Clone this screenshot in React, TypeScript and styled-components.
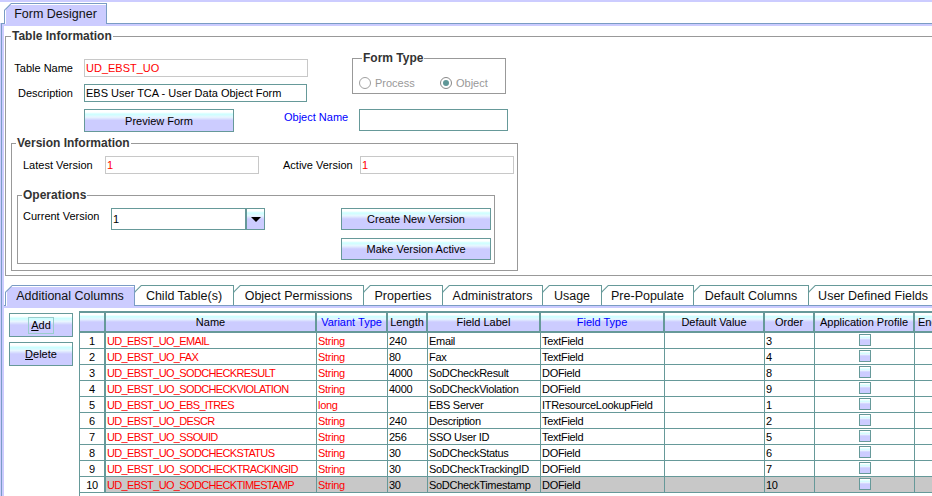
import React from 'react'
import styled, { createGlobalStyle } from 'styled-components'

const TEAL = '#669999'
const EDGE = '#7a9cc4'
const LAVENDER = '#ccccff'
const CYAN = '#ccffff'
const GLOSS = `linear-gradient(to bottom, #ffffff 0%, #ffffff 10%, ${CYAN} 20%, #e8f6ff 34%, ${LAVENDER} 50%, ${LAVENDER} 100%)`

const GlobalStyle = createGlobalStyle`
  html, body { margin: 0; padding: 0; background: #fff; }
  body {
    font-family: "Liberation Sans", Arial, sans-serif;
    font-size: 11px;
    color: #000;
  }
`

const Page = styled.div`
  width: 932px;
  height: 496px;
  overflow: hidden;
  box-sizing: border-box;
  border-top: 2px solid ${LAVENDER};
  background: #fff;
  display: flex;
  flex-direction: column;
`

const TopTabs = styled.div`
  height: 21px;
  flex: none;
  display: flex;
  align-items: flex-end;
  padding-left: 5px;
`

const TabShape = styled.div<{ $edge: string; $width: number; $selected?: boolean }>`
  position: relative;
  z-index: ${p => (p.$selected ? 2 : 1)};
  flex: none;
  width: ${p => p.$width}px;
  height: ${p => (p.$selected ? 21 : 20)}px;
  margin-left: -1px;
  margin-bottom: ${p => (p.$selected ? -1 : 0)}px;
  box-sizing: border-box;
  padding: 1px 1px 0 1px;
  background: ${p => p.$edge};
  clip-path: polygon(7px 0, 100% 0, 100% 100%, 0 100%, 0 7px);
`

const TabFace = styled.div<{ $selected?: boolean }>`
  height: 100%;
  box-sizing: border-box;
  padding-bottom: ${p => (p.$selected ? 1 : 0)}px;
  background: ${p => (p.$selected ? LAVENDER : '#fff')};
  box-shadow: ${p => (p.$selected ? 'inset 1px 1px 0 #fff' : 'none')};
  clip-path: polygon(6.5px 0, 100% 0, 100% 100%, 0 100%, 0 6.5px);
  display: flex;
  align-items: center;
  justify-content: center;
  font-size: 12.5px;
  color: #111;
  white-space: nowrap;
`

const Pane = styled.div`
  flex: 1;
  min-height: 0;
  margin-left: 1px;
  border-top: 1px solid ${EDGE};
  border-left: 1px solid ${EDGE};
  box-shadow: -1px 0 0 ${LAVENDER};
  display: flex;
  flex-direction: column;
`

const PaneBody = styled.div`
  flex: 1;
  min-height: 0;
  border-top: 2px solid ${LAVENDER};
  border-left: 2px solid ${LAVENDER};
  display: flex;
  flex-direction: column;
`

const Group = styled.fieldset<{ $width?: number }>`
  margin: 0;
  padding: 0;
  min-width: 0;
  box-sizing: border-box;
  border: 1px solid #999999;
  ${p => (p.$width ? `width: ${p.$width}px; flex: none;` : '')}
`

const GroupTitle = styled.legend<{ $indent: number }>`
  padding: 0 1px;
  margin-left: ${p => p.$indent}px;
  font-weight: bold;
  font-size: 12px;
  line-height: 14px;
  color: #333;
`

const TableInfo = styled(Group)`
  margin: 3px -14px 0 1px;
`

const InfoTop = styled.div`
  display: flex;
  align-items: flex-start;
  margin-top: 8px;
`

const InfoFields = styled.div`
  width: 346px;
  flex: none;
  padding-top: 8px;
  display: flex;
  flex-direction: column;
  gap: 7px;
`

const FieldRow = styled.div`
  display: flex;
  align-items: center;
  gap: 11px;
`

const FieldLabel = styled.div<{ $width: number; $align?: string; $color?: string }>`
  width: ${p => p.$width}px;
  flex: none;
  text-align: ${p => p.$align || 'left'};
  color: ${p => p.$color || '#000'};
  line-height: 14px;
  white-space: nowrap;
`

const TextBox = styled.div<{ $width: number; $height?: number; $editable?: boolean; $color?: string }>`
  width: ${p => p.$width}px;
  height: ${p => p.$height || 18}px;
  flex: none;
  box-sizing: border-box;
  border: 1px solid ${p => (p.$editable ? TEAL : '#c8c8c8')};
  background: #fff;
  padding-left: 1px;
  display: flex;
  align-items: center;
  color: ${p => p.$color || '#000'};
  white-space: nowrap;
  overflow: hidden;
`

const FormTypeGroup = styled(Group)`
  padding: 0 0 3px 6px;
`

const RadioRow = styled.div`
  display: flex;
  align-items: center;
  height: 14px;
  margin-top: 11px;
`

const RadioItem = styled.div<{ $width?: number }>`
  display: flex;
  align-items: center;
  gap: 4px;
  color: #999;
  ${p => (p.$width ? `width: ${p.$width}px;` : '')}
`

const RadioDot = styled.span<{ $on?: boolean }>`
  width: 12px;
  height: 12px;
  box-sizing: border-box;
  border-radius: 50%;
  border: 1px solid ${p => (p.$on ? '#888' : '#a0a0a0')};
  background: #fff;
  display: flex;
  align-items: center;
  justify-content: center;
  &::after {
    content: '';
    display: ${p => (p.$on ? 'block' : 'none')};
    width: 6px;
    height: 6px;
    border-radius: 50%;
    background: #5f9797;
  }
`

const InfoButtons = styled.div`
  display: flex;
  align-items: flex-start;
  margin-top: 7px;
  padding-left: 78px;
`

const GlossButton = styled.div<{ $width: number; $height: number }>`
  width: ${p => p.$width}px;
  height: ${p => p.$height}px;
  flex: none;
  box-sizing: border-box;
  border: 1px solid ${TEAL};
  background: ${GLOSS};
  display: flex;
  align-items: center;
  justify-content: center;
  color: #000;
  white-space: nowrap;
`

const ObjectLabel = styled(FieldLabel)`
  margin: 1px 0 0 50px;
`

const VersionGroup = styled(Group)`
  margin: 4px 0 4px 5px;
`

const VersionRow = styled.div`
  display: flex;
  align-items: center;
  margin-top: 6px;
  padding-left: 11px;
`

const ActiveLabel = styled(FieldLabel)`
  margin-left: 24px;
`

const OpsGroup = styled(Group)`
  margin: 14px 0 6px 5px;
`

const OpsBody = styled.div`
  display: flex;
  align-items: flex-start;
  margin-top: 6px;
  padding: 0 0 3px 5px;
`

const OpsLabel = styled(FieldLabel)`
  margin-top: 1px;
`

const Combo = styled.div`
  display: flex;
  width: 154px;
  height: 22px;
  flex: none;
`

const ComboArrow = styled.div`
  width: 19px;
  flex: none;
  box-sizing: border-box;
  border: 1px solid ${TEAL};
  background: ${GLOSS};
  display: flex;
  align-items: center;
  justify-content: center;
  &::after {
    content: '';
    border-left: 5px solid transparent;
    border-right: 5px solid transparent;
    border-top: 5px solid #000;
    margin-top: 1px;
  }
`

const ButtonStack = styled.div`
  display: flex;
  flex-direction: column;
  gap: 8px;
  margin-left: 76px;
`

const SubTabs = styled.div`
  display: flex;
  align-items: flex-start;
  height: 20px;
  flex: none;
  margin-top: 9px;
  padding-left: 2px;
`

const SubTabRule = styled.div`
  flex: none;
  height: 0;
  border-top: 1px solid ${EDGE};
  border-bottom: 2px solid ${LAVENDER};
`

const ColumnsPanel = styled.div`
  flex: 1;
  min-height: 0;
  display: flex;
  align-items: stretch;
`

const ButtonCol = styled.div`
  display: flex;
  flex-direction: column;
  gap: 5px;
  padding: 5px 0 0 5px;
`

const FocusRing = styled.span`
  border: 1px solid #99cccc;
  padding: 0 2px;
  line-height: 15px;
`

const TableWrap = styled.div`
  flex: 1;
  min-width: 0;
  margin: 3px 0 0 6px;
  border-left: 1px solid ${TEAL};
  overflow: hidden;
`

const COLS = [26, 211, 71, 40, 113, 124, 100, 50, 100, 60]

const Grid = styled.div`
  display: grid;
  grid-template-columns: ${COLS.map(c => `${c}px`).join(' ')};
  width: max-content;
  border-top: 2px solid ${TEAL};
`

const HeadCell = styled.div<{ $color?: string; $align?: string }>`
  height: 20px;
  box-sizing: border-box;
  border-right: 2px solid ${TEAL};
  border-bottom: 2px solid ${TEAL};
  background: ${GLOSS};
  text-align: ${p => p.$align || 'center'};
  padding-left: ${p => (p.$align === 'left' ? 3 : 0)}px;
  line-height: 19px;
  color: ${p => p.$color || '#000'};
  white-space: nowrap;
  overflow: hidden;
`

const Cell = styled.div<{ $color?: string; $selected?: boolean; $num?: boolean; $tight?: boolean }>`
  height: 16px;
  box-sizing: border-box;
  border-right: ${p => (p.$num ? 2 : 1)}px solid ${TEAL};
  border-bottom: 1px solid ${TEAL};
  background: ${p => (p.$selected ? '#c8c8c8' : '#fff')};
  color: ${p => p.$color || '#000'};
  text-align: ${p => (p.$num ? 'center' : 'left')};
  padding-left: ${p => (p.$num ? 0 : 1)}px;
  line-height: 16px;
  letter-spacing: ${p => (p.$tight ? -0.65 : -0.3)}px;
  white-space: nowrap;
  overflow: hidden;
`

const CheckCell = styled(Cell)`
  display: flex;
  justify-content: center;
  padding-top: 1px;
`

const CheckBox = styled.span`
  width: 12px;
  height: 12px;
  box-sizing: border-box;
  border: 1px solid ${TEAL};
  background: ${GLOSS};
`

const subTabs: [string, number][] = [
  ['Additional Columns', 130],
  ['Child Table(s)', 100],
  ['Object Permissions', 131],
  ['Properties', 80],
  ['Administrators', 101],
  ['Usage', 60],
  ['Pre-Populate', 93],
  ['Default Columns', 116],
  ['User Defined Fields', 130],
]

const headers: [string, string?][] = [
  [''],
  ['Name'],
  ['Variant Type', '#0000ff'],
  ['Length'],
  ['Field Label'],
  ['Field Type', '#0000ff'],
  ['Default Value'],
  ['Order'],
  ['Application Profile'],
]

type Row = [string, string, string, string, string, string]

const rows: Row[] = [
  ['UD_EBST_UO_EMAIL', 'String', '240', 'Email', 'TextField', '3'],
  ['UD_EBST_UO_FAX', 'String', '80', 'Fax', 'TextField', '4'],
  ['UD_EBST_UO_SODCHECKRESULT', 'String', '4000', 'SoDCheckResult', 'DOField', '8'],
  ['UD_EBST_UO_SODCHECKVIOLATION', 'String', '4000', 'SoDCheckViolation', 'DOField', '9'],
  ['UD_EBST_UO_EBS_ITRES', 'long', '', 'EBS Server', 'ITResourceLookupField', '1'],
  ['UD_EBST_UO_DESCR', 'String', '240', 'Description', 'TextField', '2'],
  ['UD_EBST_UO_SSOUID', 'String', '256', 'SSO User ID', 'TextField', '5'],
  ['UD_EBST_UO_SODCHECKSTATUS', 'String', '30', 'SoDCheckStatus', 'DOField', '6'],
  ['UD_EBST_UO_SODCHECKTRACKINGID', 'String', '30', 'SoDCheckTrackingID', 'DOField', '7'],
  ['UD_EBST_UO_SODCHECKTIMESTAMP', 'String', '30', 'SoDCheckTimestamp', 'DOField', '10'],
]

const RED = '#ff0000'

export default function App() {
  return (
    <>
      <GlobalStyle />
      <Page>
        <TopTabs>
          <TabShape $edge={EDGE} $width={103} $selected>
            <TabFace $selected>Form Designer</TabFace>
          </TabShape>
        </TopTabs>
        <Pane>
          <PaneBody>
            <TableInfo>
              <GroupTitle $indent={5}>Table Information</GroupTitle>
              <InfoTop>
                <InfoFields>
                  <FieldRow>
                    <FieldLabel $width={67} $align="right">Table Name</FieldLabel>
                    <TextBox $width={224} $color={RED}>UD_EBST_UO</TextBox>
                  </FieldRow>
                  <FieldRow>
                    <FieldLabel $width={67} $align="right">Description</FieldLabel>
                    <TextBox $width={223} $editable>EBS User TCA - User Data Object Form</TextBox>
                  </FieldRow>
                </InfoFields>
                <FormTypeGroup $width={154}>
                  <GroupTitle $indent={3}>Form Type</GroupTitle>
                  <RadioRow>
                    <RadioItem $width={81}>
                      <RadioDot />
                      Process
                    </RadioItem>
                    <RadioItem>
                      <RadioDot $on />
                      Object
                    </RadioItem>
                  </RadioRow>
                </FormTypeGroup>
              </InfoTop>
              <InfoButtons>
                <GlossButton $width={150} $height={23}>Preview Form</GlossButton>
                <ObjectLabel $width={75} $color="#0000ff">Object Name</ObjectLabel>
                <TextBox $width={149} $height={22} $editable />
              </InfoButtons>
              <VersionGroup $width={507}>
                <GroupTitle $indent={4}>Version Information</GroupTitle>
                <VersionRow>
                  <FieldLabel $width={82}>Latest Version</FieldLabel>
                  <TextBox $width={154} $color={RED}>1</TextBox>
                  <ActiveLabel $width={77}>Active Version</ActiveLabel>
                  <TextBox $width={154} $color={RED}>1</TextBox>
                </VersionRow>
                <OpsGroup $width={478}>
                  <GroupTitle $indent={4}>Operations</GroupTitle>
                  <OpsBody>
                    <OpsLabel $width={88}>Current Version</OpsLabel>
                    <Combo>
                      <TextBox $width={135} $height={22} $editable>1</TextBox>
                      <ComboArrow />
                    </Combo>
                    <ButtonStack>
                      <GlossButton $width={150} $height={22}>Create New Version</GlossButton>
                      <GlossButton $width={150} $height={22}>Make Version Active</GlossButton>
                    </ButtonStack>
                  </OpsBody>
                </OpsGroup>
              </VersionGroup>
            </TableInfo>

            <SubTabs>
              {subTabs.map(([label, width], i) => (
                <TabShape key={label} $edge={i === 0 ? EDGE : TEAL} $width={width} $selected={i === 0}>
                  <TabFace $selected={i === 0}>{label}</TabFace>
                </TabShape>
              ))}
            </SubTabs>
            <SubTabRule />

            <ColumnsPanel>
              <ButtonCol>
                <GlossButton $width={64} $height={24}>
                  <FocusRing>
                    <u>A</u>dd
                  </FocusRing>
                </GlossButton>
                <GlossButton $width={64} $height={24}>
                  <span>
                    <u>D</u>elete
                  </span>
                </GlossButton>
              </ButtonCol>
              <TableWrap>
                <Grid>
                  {headers.map(([h, c], i) => (
                    <HeadCell key={i} $color={c}>{h}</HeadCell>
                  ))}
                  <HeadCell $align="left">Encrypted</HeadCell>
                  {rows.map((r, i) => {
                    const sel = i === rows.length - 1
                    return (
                      <React.Fragment key={i}>
                        <Cell $num>{i + 1}</Cell>
                        <Cell $color={RED} $selected={sel} $tight>{r[0]}</Cell>
                        <Cell $color={RED} $selected={sel}>{r[1]}</Cell>
                        <Cell $selected={sel}>{r[2]}</Cell>
                        <Cell $selected={sel}>{r[3]}</Cell>
                        <Cell $selected={sel}>{r[4]}</Cell>
                        <Cell $selected={sel} />
                        <Cell $selected={sel}>{r[5]}</Cell>
                        <CheckCell $selected={sel}>
                          <CheckBox />
                        </CheckCell>
                        <Cell $selected={sel} />
                      </React.Fragment>
                    )
                  })}
                </Grid>
              </TableWrap>
            </ColumnsPanel>
          </PaneBody>
        </Pane>
      </Page>
    </>
  )
}
